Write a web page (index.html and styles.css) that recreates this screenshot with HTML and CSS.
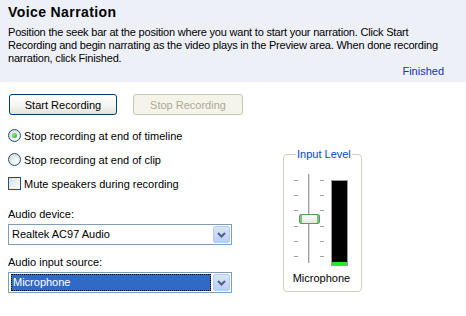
FILE: index.html
```html
<!DOCTYPE html>
<html>
<head>
<meta charset="utf-8">
<link rel="stylesheet" href="styles.css">
</head>
<body>
<div class="header">
  <h1 class="title">Voice Narration</h1>
  <p class="intro">Position the seek bar at the position where you want to start your narration. Click Start<br>Recording and begin narrating as the video plays in the Preview area. When done recording<br>narration, click Finished.</p>
  <div class="finish-row"><a class="finished">Finished</a></div>
</div>
<div class="main">
  <div class="buttons">
    <button class="btn">Start Recording</button>
    <button class="btn disabled">Stop Recording</button>
  </div>
  <div class="body-row">
    <div class="left">
      <div class="opt"><span class="radio checked"></span><span>Stop recording at end of timeline</span></div>
      <div class="opt"><span class="radio"></span><span>Stop recording at end of clip</span></div>
      <div class="opt"><span class="check"></span><span>Mute speakers during recording</span></div>
      <div class="label first">Audio device:</div>
      <div class="combo"><span class="value">Realtek AC97 Audio</span><span class="arrow"><svg width="9" height="6" viewBox="0 0 9 6"><path d="M1 1 L4.5 4.5 L8 1" fill="none" stroke="#4d6185" stroke-width="2"/></svg></span></div>
      <div class="label">Audio input source:</div>
      <div class="combo"><span class="value selected">Microphone</span><span class="arrow"><svg width="9" height="6" viewBox="0 0 9 6"><path d="M1 1 L4.5 4.5 L8 1" fill="none" stroke="#4d6185" stroke-width="2"/></svg></span></div>
    </div>
    <fieldset class="group">
      <legend>Input Level</legend>
      <div class="level">
        <div class="slider">
          <div class="ticks"><i></i><i></i><i></i><i></i><i></i><i></i></div>
          <div class="track"></div>
          <div class="ticks"><i></i><i></i><i></i><i></i><i></i><i></i></div>
          <div class="thumb"></div>
        </div>
        <div class="meter"><div class="meter-fill"></div></div>
      </div>
      <div class="mic">Microphone</div>
    </fieldset>
  </div>
</div>
</body>
</html>
```
FILE: styles.css
```css
* { box-sizing: border-box; }
html, body { margin: 0; padding: 0; background: #fff; }
body {
  width: 466px; height: 316px; overflow: hidden;
  font-family: "Liberation Sans", Arial, sans-serif;
  font-size: 11px; color: #000;
}
.header {
  height: 82px;
  background: #eef0f8;
  padding: 4px 22px 0 8px;
}
.title {
  margin: 0;
  font-size: 14px;
  line-height: 17px;
  font-weight: bold;
  letter-spacing: 0.4px;
}
.intro {
  margin: 5px 0 0 0;
  line-height: 13px;
  font-size: 11px;
  letter-spacing: -0.2px;
  white-space: nowrap;
}
.finish-row { display: flex; justify-content: flex-end; margin-top: 0; line-height: 13px; }
.finished { color: #1530b8; }
.main { padding: 12px 8px 0 8px; }
.buttons { display: flex; gap: 16px; padding-left: 1px; }
.btn {
  width: 108px; height: 21px;
  font-family: "Liberation Sans", Arial, sans-serif;
  font-size: 11px;
  border: 1px solid #003c74;
  border-radius: 3px;
  background: linear-gradient(#ffffff, #f4f4f0 60%, #e3e2da);
  color: #000;
  padding: 0;
}
.btn.disabled {
  width: 110px;
  border-color: #c9c7ba;
  background: #f5f4ea;
  color: #aca899;
}
.body-row { display: flex; align-items: flex-start; }
.left { width: 225px; padding-top: 14px; }
.opt { display: flex; align-items: center; gap: 3px; height: 13px; margin-bottom: 11px; }
.radio {
  width: 13px; height: 13px; border-radius: 50%;
  border: 1px solid #1c5180;
  background: radial-gradient(circle at 65% 65%, #fff 0, #e8e8e3 50%, #d0d0c8 100%);
  display: flex; align-items: center; justify-content: center;
}
.radio.checked::after {
  content: ""; width: 5px; height: 5px; border-radius: 50%;
  background: radial-gradient(circle at 35% 35%, #8ee68e, #21a121);
}
.check {
  width: 13px; height: 13px;
  border: 1px solid #1c5180;
  background: linear-gradient(135deg, #dcdcd7, #fff);
}
.label { line-height: 13px; margin-bottom: 3px; }
.label.first { margin-top: 18px; }
.combo {
  width: 224px; height: 21px;
  border: 1px solid #7f9db9;
  background: #fff;
  display: flex; align-items: center;
  padding: 1px;
  margin-bottom: 11px;
}
.value { flex: 1; padding-left: 2px; line-height: 17px; height: 17px; }
.value.selected {
  background: #316ac5; color: #fff;
  outline: 1px dotted #000; outline-offset: -1px;
  margin: 0 2px 0 1px;
}
.arrow {
  width: 17px; height: 17px;
  border-radius: 2px;
  background: linear-gradient(#dbe5fd, #b9cdf7);
  border: 1px solid #b9c9f0;
  display: flex; align-items: center; justify-content: center;
}
.group {
  margin: 33px 0 0 50px;
  width: 75px; height: 144px;
  border: 1px solid #d0d0bf;
  border-radius: 4px;
  padding: 13px 9px 0 10px;
}
.group legend {
  color: #0046d5;
  padding: 0 1px;
  margin-left: 2px;
  font-size: 11px;
  line-height: 13px;
  white-space: nowrap;
}
.level { display: flex; gap: 6px; align-items: flex-start; }
.slider { position: relative; display: flex; width: 31px; height: 89px; justify-content: space-between; }
.ticks {
  display: flex; flex-direction: column; justify-content: space-between;
  height: 77px; margin-top: 6px; width: 5px;
}
.ticks i { display: block; width: 4px; height: 1px; background: #a0a0a0; }
.track { width: 3px; height: 89px; border-left: 1px solid #a0a0a0; border-right: 1px solid #fff; background: #e0e0d8; }
.thumb {
  position: absolute; left: 5px; top: 40px;
  width: 21px; height: 10px;
  border: 1px solid #5a9a5a;
  border-radius: 2px;
  background: linear-gradient(#fff, #e6e6e0);
  box-shadow: inset 2px 0 0 #7cc47c, inset -2px 0 0 #7cc47c;
}
.meter {
  width: 17px; height: 86px; margin-top: 6px;
  background: #000;
  border: 1px solid #9a9a9a;
  display: flex; flex-direction: column; justify-content: flex-end;
}
.meter-fill { height: 3px; background: #29e629; }
.mic { text-align: center; margin-top: 6px; line-height: 13px; margin-left: -3px; }
```
